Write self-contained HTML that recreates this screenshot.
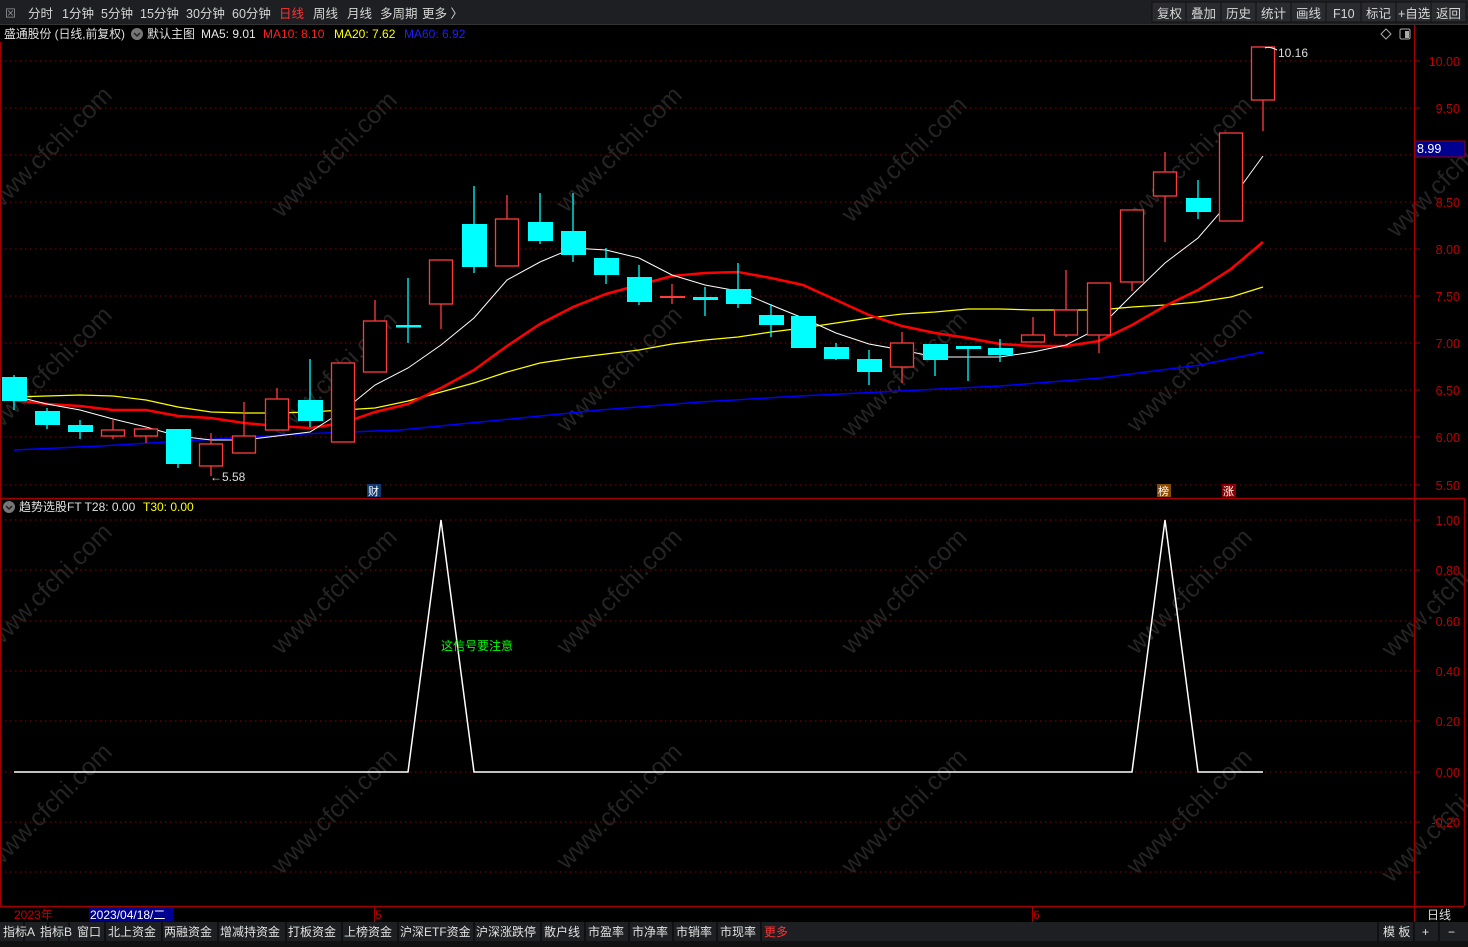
<!DOCTYPE html>
<html><head><meta charset="utf-8"><style>
html,body{margin:0;padding:0;background:#000;width:1468px;height:947px;overflow:hidden;font-family:"Liberation Sans","Noto Sans CJK SC",sans-serif;}
svg{position:absolute;left:0;top:0}
</style></head><body>
<svg width="1468" height="947" xmlns="http://www.w3.org/2000/svg" font-family="Liberation Sans, Noto Sans CJK SC, sans-serif">
<rect width="1468" height="947" fill="#000"/>
<!-- watermarks -->
<g fill="#242424" font-size="25" text-anchor="middle">
<text transform="translate(55,155) rotate(-45)">www.cfchi.com</text>
<text transform="translate(340,160) rotate(-45)">www.cfchi.com</text>
<text transform="translate(625,155) rotate(-45)">www.cfchi.com</text>
<text transform="translate(910,165) rotate(-45)">www.cfchi.com</text>
<text transform="translate(1195,165) rotate(-45)">www.cfchi.com</text>
<text transform="translate(1455,180) rotate(-45)">www.cfchi.com</text>
<text transform="translate(55,375) rotate(-45)">www.cfchi.com</text>
<text transform="translate(340,380) rotate(-45)">www.cfchi.com</text>
<text transform="translate(625,375) rotate(-45)">www.cfchi.com</text>
<text transform="translate(910,380) rotate(-45)">www.cfchi.com</text>
<text transform="translate(1195,375) rotate(-45)">www.cfchi.com</text>
<text transform="translate(55,592) rotate(-45)">www.cfchi.com</text>
<text transform="translate(340,597) rotate(-45)">www.cfchi.com</text>
<text transform="translate(625,597) rotate(-45)">www.cfchi.com</text>
<text transform="translate(910,597) rotate(-45)">www.cfchi.com</text>
<text transform="translate(1195,597) rotate(-45)">www.cfchi.com</text>
<text transform="translate(1450,600) rotate(-45)">www.cfchi.com</text>
<text transform="translate(55,812) rotate(-45)">www.cfchi.com</text>
<text transform="translate(340,817) rotate(-45)">www.cfchi.com</text>
<text transform="translate(625,812) rotate(-45)">www.cfchi.com</text>
<text transform="translate(910,817) rotate(-45)">www.cfchi.com</text>
<text transform="translate(1195,817) rotate(-45)">www.cfchi.com</text>
<text transform="translate(1450,825) rotate(-45)">www.cfchi.com</text>
</g>
<!-- top bar -->
<rect x="0" y="0" width="1468" height="24" fill="#1e1f22"/>
<rect x="0" y="24" width="1468" height="1" fill="#333"/>
<g font-size="12.5" fill="#d6d6d6">
<text x="5" y="17" fill="#999" font-size="11">⊠</text>
<text x="28" y="18">分时</text><text x="62" y="18">1分钟</text><text x="101" y="18">5分钟</text><text x="140" y="18">15分钟</text><text x="186" y="18">30分钟</text><text x="232" y="18">60分钟</text>
<text x="279" y="18" fill="#ff3333">日线</text><text x="313" y="18">周线</text><text x="347" y="18">月线</text><text x="380" y="18">多周期</text><text x="422" y="18">更多 〉</text>
</g>
<g fill="#2a2b2e" stroke="#111">
<rect x="1152" y="2" width="34" height="20"/><rect x="1186" y="2" width="35" height="20"/><rect x="1221" y="2" width="35" height="20"/><rect x="1256" y="2" width="35" height="20"/><rect x="1291" y="2" width="35" height="20"/><rect x="1326" y="2" width="35" height="20"/><rect x="1361" y="2" width="35" height="20"/><rect x="1396" y="2" width="35" height="20"/><rect x="1431" y="2" width="35" height="20"/>
</g>
<g font-size="12.5" fill="#d6d6d6">
<text x="1157" y="18">复权</text><text x="1191" y="18">叠加</text><text x="1226" y="18">历史</text><text x="1261" y="18">统计</text><text x="1296" y="18">画线</text><text x="1333" y="18">F10</text><text x="1366" y="18">标记</text><text x="1398" y="18">+自选</text><text x="1436" y="18">返回</text>
</g>
<!-- info line -->
<g font-size="12">
<text x="4" y="38" fill="#e0e0e0" textLength="121" lengthAdjust="spacingAndGlyphs">盛通股份 (日线,前复权)</text>
<circle cx="137" cy="34" r="6" fill="#777"/><path d="M134 33 l3 3 l3 -3" stroke="#222" stroke-width="1.5" fill="none"/>
<text x="147" y="38" fill="#e0e0e0">默认主图</text>
<text x="201" y="38" fill="#e8e8e8">MA5: 9.01</text>
<text x="263" y="38" fill="#ff2020">MA10: 8.10</text>
<text x="334" y="38" fill="#ffff00">MA20: 7.62</text>
<text x="404" y="38" fill="#1e1eff">MA60: 6.92</text>
</g>
<path d="M1386 29 l5 5 l-5 5 l-5 -5z" fill="none" stroke="#aaa"/>
<rect x="1400" y="29" width="10" height="10" rx="1.5" fill="none" stroke="#aaa"/><rect x="1405" y="31" width="4" height="7" fill="#aaa"/>
<!-- grid -->
<g stroke="#8b0000" stroke-dasharray="1.5,3.5" stroke-width="1">
<line x1="0" y1="61" x2="1414" y2="61"/><line x1="0" y1="108" x2="1414" y2="108"/><line x1="0" y1="155" x2="1414" y2="155"/><line x1="0" y1="202" x2="1414" y2="202"/><line x1="0" y1="249" x2="1414" y2="249"/><line x1="0" y1="296" x2="1414" y2="296"/><line x1="0" y1="343" x2="1414" y2="343"/><line x1="0" y1="390" x2="1414" y2="390"/><line x1="0" y1="437" x2="1414" y2="437"/><line x1="0" y1="485" x2="1414" y2="485"/>
<line x1="0" y1="520" x2="1414" y2="520"/><line x1="0" y1="570" x2="1414" y2="570"/><line x1="0" y1="621" x2="1414" y2="621"/><line x1="0" y1="671" x2="1414" y2="671"/><line x1="0" y1="721" x2="1414" y2="721"/><line x1="0" y1="772" x2="1414" y2="772"/><line x1="0" y1="822" x2="1414" y2="822"/><line x1="0" y1="872" x2="1414" y2="872"/>
</g>
<!-- frame -->
<g stroke="#a00000" stroke-width="1.5" fill="none">
<line x1="1414.5" y1="25" x2="1414.5" y2="922"/>
<line x1="0" y1="498.5" x2="1464" y2="498.5"/>
<line x1="0" y1="906.5" x2="1464" y2="906.5"/>
<line x1="1464.5" y1="498" x2="1464.5" y2="906"/>
<line x1="0.5" y1="42" x2="0.5" y2="906"/>
</g>
<!-- axis labels -->
<g font-size="12.5" fill="#c00000" text-anchor="end">
<text x="1460" y="66">10.00</text><text x="1460" y="113">9.50</text><text x="1460" y="207">8.50</text><text x="1460" y="254">8.00</text><text x="1460" y="301">7.50</text><text x="1460" y="348">7.00</text><text x="1460" y="395">6.50</text><text x="1460" y="442">6.00</text><text x="1460" y="490">5.50</text>
<text x="1460" y="525">1.00</text><text x="1460" y="575">0.80</text><text x="1460" y="626">0.60</text><text x="1460" y="676">0.40</text><text x="1460" y="726">0.20</text><text x="1460" y="777">0.00</text><text x="1460" y="827">-0.20</text>
</g>
<g stroke="#a00000">
<line x1="1414" y1="61" x2="1420" y2="61"/><line x1="1414" y1="108" x2="1420" y2="108"/><line x1="1414" y1="202" x2="1420" y2="202"/><line x1="1414" y1="249" x2="1420" y2="249"/><line x1="1414" y1="296" x2="1420" y2="296"/><line x1="1414" y1="343" x2="1420" y2="343"/><line x1="1414" y1="390" x2="1420" y2="390"/><line x1="1414" y1="437" x2="1420" y2="437"/><line x1="1414" y1="485" x2="1420" y2="485"/>
<line x1="1414" y1="520" x2="1420" y2="520"/><line x1="1414" y1="570" x2="1420" y2="570"/><line x1="1414" y1="621" x2="1420" y2="621"/><line x1="1414" y1="671" x2="1420" y2="671"/><line x1="1414" y1="721" x2="1420" y2="721"/><line x1="1414" y1="772" x2="1420" y2="772"/><line x1="1414" y1="822" x2="1420" y2="822"/><line x1="1414" y1="872" x2="1420" y2="872"/>
</g>
<rect x="1415" y="141" width="50" height="16" fill="#000090" stroke="#a00000"/>
<text x="1417" y="153" font-size="12.5" fill="#fff">8.99</text>
<!-- MA lines -->
<polyline fill="none" stroke="#0000ff" stroke-width="1.5" points="14,450 100,446 200,440 300,434 400,430 500,420 600,410 700,402 800,396 900,391 1000,386 1100,378 1200,365 1263,352"/>
<polyline fill="none" stroke="#ffff00" stroke-width="1.2" points="14,397 47,396 80,395 113,396 146,400 178,407 211,412 244,413 277,413 310,412 343,410 375,408 408,401 441,392 474,383 507,372 540,363 573,358 606,354 639,350 672,344 705,340 738,337 771,332 803,328 836,323 869,318 902,314 935,312 968,309 1000,309 1033,310 1066,310 1099,310 1132,307 1165,305 1198,302 1231,297 1263,287"/>
<polyline fill="none" stroke="#ff0000" stroke-width="2.5" points="14,400 47,404 80,406 113,410 146,410 178,416 211,418 244,423 277,426 310,428 343,423 375,412 408,404 441,388 474,370 507,346 540,324 573,307 606,294 639,285 672,276 705,273 738,272 771,278 803,285 836,300 869,315 902,326 935,333 968,338 1000,344 1033,346 1066,346 1099,341 1132,325 1165,306 1198,290 1231,269 1263,242"/>
<polyline fill="none" stroke="#ffffff" stroke-width="1" points="14,396 47,404 80,410 113,419 146,427 178,436 211,440 244,440 277,436 310,432 343,411 375,385 408,368 441,345 474,318 507,280 540,262 573,248 606,250 639,258 672,275 705,285 738,291 771,305 803,318 836,333 869,344 902,350 935,357 968,357 1000,357 1033,352 1066,345 1099,328 1132,295 1165,263 1198,238 1231,200 1263,156"/>
<!-- candles: cyan -->
<g stroke="#00ffff" stroke-width="1.3">
<line x1="14" y1="375" x2="14" y2="410"/><line x1="47" y1="408" x2="47" y2="429"/><line x1="80" y1="420" x2="80" y2="439"/><line x1="178" y1="429" x2="178" y2="468"/><line x1="310" y1="359" x2="310" y2="427"/><line x1="408" y1="278" x2="408" y2="343"/><line x1="474" y1="186" x2="474" y2="273"/><line x1="540" y1="193" x2="540" y2="244"/><line x1="573" y1="193" x2="573" y2="262"/><line x1="606" y1="248" x2="606" y2="284"/><line x1="639" y1="265" x2="639" y2="305"/><line x1="705" y1="287" x2="705" y2="316"/><line x1="738" y1="263" x2="738" y2="308"/><line x1="771" y1="304" x2="771" y2="337"/><line x1="836" y1="343" x2="836" y2="360"/><line x1="869" y1="350" x2="869" y2="385"/><line x1="935" y1="344" x2="935" y2="376"/><line x1="968" y1="346" x2="968" y2="381"/><line x1="1000" y1="339" x2="1000" y2="362"/><line x1="1198" y1="180" x2="1198" y2="219"/>
</g>
<g fill="#00ffff">
<rect x="2" y="377" width="25" height="24"/><rect x="35" y="411" width="25" height="14"/><rect x="68" y="425" width="25" height="7"/><rect x="166" y="429" width="25" height="35"/><rect x="298" y="400" width="25" height="21"/><rect x="396" y="325" width="25" height="2.5"/><rect x="462" y="224" width="25" height="43"/><rect x="528" y="222" width="25" height="19"/><rect x="561" y="231" width="25" height="24"/><rect x="594" y="258" width="25" height="17"/><rect x="627" y="277" width="25" height="25"/><rect x="693" y="297" width="25" height="3"/><rect x="726" y="289" width="25" height="15"/><rect x="759" y="315" width="25" height="10"/><rect x="791" y="316" width="25" height="32"/><rect x="824" y="347" width="25" height="12"/><rect x="857" y="359" width="25" height="13"/><rect x="923" y="344" width="25" height="16"/><rect x="956" y="346" width="25" height="3"/><rect x="988" y="348" width="25" height="7"/><rect x="1186" y="198" width="25" height="14"/>
</g>
<!-- candles: red -->
<g stroke="#ff3c3c" stroke-width="1.3">
<line x1="113" y1="419" x2="113" y2="439"/><line x1="146" y1="427" x2="146" y2="443"/><line x1="211" y1="433" x2="211" y2="476"/><line x1="244" y1="402" x2="244" y2="453"/><line x1="277" y1="388" x2="277" y2="430"/><line x1="375" y1="300" x2="375" y2="372"/><line x1="441" y1="260" x2="441" y2="329"/><line x1="507" y1="195" x2="507" y2="266"/><line x1="672" y1="284" x2="672" y2="304"/><line x1="902" y1="332" x2="902" y2="383"/><line x1="1033" y1="317" x2="1033" y2="342"/><line x1="1066" y1="270" x2="1066" y2="337"/><line x1="1099" y1="283" x2="1099" y2="353"/><line x1="1132" y1="210" x2="1132" y2="291"/><line x1="1165" y1="152" x2="1165" y2="242"/><line x1="1263" y1="47" x2="1263" y2="131"/>
</g>
<g fill="#000" stroke="#ff3c3c" stroke-width="1.3">
<rect x="101.5" y="430" width="23" height="6"/><rect x="134.5" y="429" width="23" height="7"/><rect x="199.5" y="444" width="23" height="22"/><rect x="232.5" y="436" width="23" height="17"/><rect x="265.5" y="399" width="23" height="31"/><rect x="331.5" y="363" width="23" height="79"/><rect x="363.5" y="321" width="23" height="51"/><rect x="429.5" y="260" width="23" height="44"/><rect x="495.5" y="219" width="23" height="47"/><rect x="890.5" y="343" width="23" height="24"/><rect x="1021.5" y="335" width="23" height="7"/><rect x="1054.5" y="310" width="23" height="25"/><rect x="1087.5" y="283" width="23" height="52"/><rect x="1120.5" y="210" width="23" height="72"/><rect x="1153.5" y="172" width="23" height="24"/><rect x="1219.5" y="133" width="23" height="88"/><rect x="1251.5" y="47" width="23" height="53"/>
</g>
<rect x="660" y="296" width="25" height="2" fill="#ff3c3c"/>
<!-- annotations -->
<text x="210" y="481" font-size="12" fill="#ddd">←5.58</text>
<path d="M1265 48 q4 -2 12 2" stroke="#fff" fill="none"/>
<text x="1278" y="57" font-size="12" fill="#ddd">10.16</text>
<rect x="367" y="484" width="14" height="13" fill="#103a70"/><text x="368" y="495" font-size="11" fill="#fff">财</text>
<rect x="1157" y="484" width="14" height="13" fill="#8a4a00"/><text x="1158" y="495" font-size="11" fill="#fff">榜</text>
<rect x="1222" y="484" width="14" height="13" fill="#8a0000"/><text x="1223" y="495" font-size="11" fill="#fff">涨</text>
<!-- indicator -->
<circle cx="9" cy="507" r="6" fill="#777"/><path d="M6 506 l3 3 l3 -3" stroke="#222" stroke-width="1.5" fill="none"/>
<text x="19" y="511" font-size="12" fill="#e0e0e0">趋势选股FT  T28: 0.00</text>
<text x="143" y="511" font-size="12" fill="#ffff00">T30: 0.00</text>
<polyline fill="none" stroke="#fff" stroke-width="1.5" points="14,772 408,772 441,520 474,772 1132,772 1165,520 1198,772 1263,772"/>
<text x="441" y="650" font-size="12" fill="#00ff00">这信号要注意</text>
<!-- date row -->
<text x="14" y="919" font-size="12" fill="#c00000">2023年</text>
<rect x="89" y="907" width="85" height="14" fill="#000090"/>
<text x="90" y="919" font-size="12" fill="#fff">2023/04/18/二</text>
<line x1="374.5" y1="906" x2="374.5" y2="922" stroke="#a00000"/><text x="375" y="919" font-size="12" fill="#c00000">5</text>
<line x1="1032.5" y1="906" x2="1032.5" y2="922" stroke="#a00000"/><text x="1033" y="919" font-size="12" fill="#c00000">6</text>
<text x="1427" y="919" font-size="12" fill="#ddd">日线</text>
<!-- bottom tabs -->
<rect x="0" y="922" width="1468" height="19" fill="#1e1f22"/>
<rect x="0" y="941" width="1468" height="6" fill="#111"/>
<g stroke="#000" stroke-width="1">
<line x1="24" y1="922" x2="24" y2="941"/><line x1="48" y1="922" x2="48" y2="941"/><line x1="69" y1="922" x2="69" y2="941"/><line x1="105" y1="922" x2="105" y2="941"/><line x1="162" y1="922" x2="162" y2="941"/><line x1="218" y1="922" x2="218" y2="941"/><line x1="286" y1="922" x2="286" y2="941"/><line x1="342" y1="922" x2="342" y2="941"/><line x1="398" y1="922" x2="398" y2="941"/><line x1="474" y1="922" x2="474" y2="941"/><line x1="541" y1="922" x2="541" y2="941"/><line x1="585" y1="922" x2="585" y2="941"/><line x1="629" y1="922" x2="629" y2="941"/><line x1="673" y1="922" x2="673" y2="941"/><line x1="717" y1="922" x2="717" y2="941"/><line x1="761" y1="922" x2="761" y2="941"/><line x1="1378" y1="922" x2="1378" y2="941"/><line x1="1414" y1="922" x2="1414" y2="941"/><line x1="1439" y1="922" x2="1439" y2="941"/>
</g>
<g font-size="12" fill="#e0e0e0">
<text x="3" y="936">指标A</text><text x="40" y="936">指标B</text><text x="77" y="936">窗口</text><text x="108" y="936">北上资金</text><text x="164" y="936">两融资金</text><text x="220" y="936">增减持资金</text><text x="288" y="936">打板资金</text><text x="344" y="936">上榜资金</text><text x="400" y="936">沪深ETF资金</text><text x="476" y="936">沪深涨跌停</text><text x="544" y="936">散户线</text><text x="588" y="936">市盈率</text><text x="632" y="936">市净率</text><text x="676" y="936">市销率</text><text x="720" y="936">市现率</text><text x="764" y="936" fill="#ff3333">更多</text>
<text x="1383" y="936">模 板</text><text x="1422" y="936">+</text><text x="1448" y="936">−</text>
</g>
</svg>
</body></html>
